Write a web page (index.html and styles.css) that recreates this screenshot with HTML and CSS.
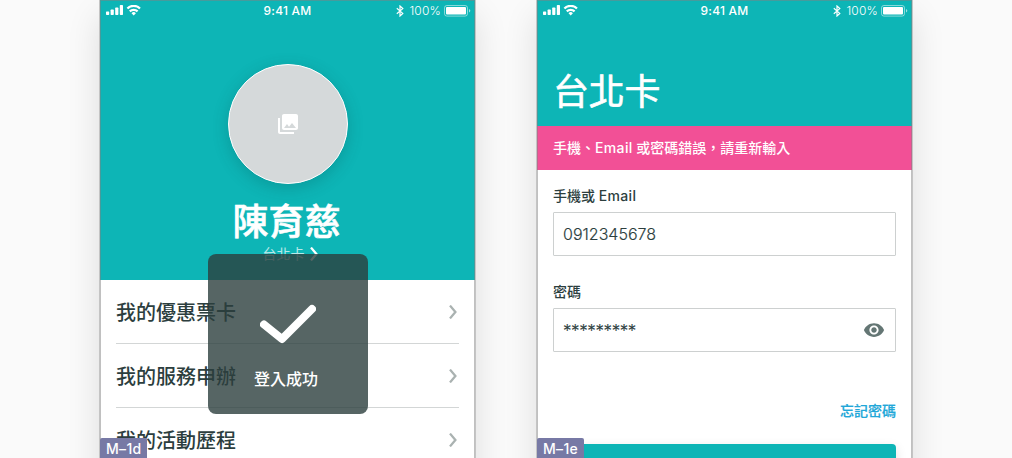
FILE: index.html
```html
<!DOCTYPE html>
<html lang="zh-Hant">
<head>
<meta charset="utf-8">
<title>台北卡</title>
<link rel="stylesheet" href="styles.css">
</head>
<body>
<svg width="0" height="0" class="defs">
  <symbol id="signal" viewBox="0 0 35 11">
    <rect x="0" y="6.4" width="3.2" height="3.6" rx=".7"/><rect x="4.6" y="4.6" width="3.2" height="5.4" rx=".7"/><rect x="9.2" y="2.5" width="3.2" height="7.5" rx=".7"/><rect x="13.8" y="0" width="3.2" height="10" rx=".7"/>
    <g fill="none" stroke="currentColor" stroke-width="2.2"><path d="M21.4 3.5a8.8 8.8 0 0 1 12.6 0"/><path d="M23.8 6.4a5.5 5.5 0 0 1 7.8 0"/></g>
    <path d="M27.7 10.4 25.5 8.2a3 3 0 0 1 4.4 0z"/>
  </symbol>
  <symbol id="bluetooth" viewBox="0 0 8 12"><path d="M.8 3.3 6.8 8.4 4 11V1L6.8 3.6.8 8.7" fill="none" stroke="currentColor" stroke-width="1.2"/></symbol>
  <symbol id="battery" viewBox="0 0 27 12"><rect x=".5" y=".5" width="23" height="10.6" rx="2.4" fill="none" stroke="currentColor" opacity=".5"/><rect x="2" y="2" width="20" height="7.6" rx="1"/><path d="M25 4v3.5q1.3-.6 1.3-1.75T25 4z" opacity=".6"/></symbol>
  <symbol id="chevron" viewBox="0 0 8 14"><path d="M1 .6 6.4 7 1 13.4" fill="none" stroke="currentColor" stroke-width="2.3"/></symbol>
</svg>
<main class="board">
  <section class="phone">
    <header class="hero">
      <div class="status"><svg class="signal"><use href="#signal"/></svg><span class="time">9:41 AM</span><span class="power"><svg class="bluetooth"><use href="#bluetooth"/></svg><span class="percent">100%</span><svg class="battery"><use href="#battery"/></svg></span></div>
      <div class="avatar"><svg width="24" height="24" viewBox="0 0 24 24"><path d="M22 16V4c0-1.100-.9-2-2-2H8c-1.100 0-2 .9-2 2v12c0 1.100.9 2 2 2h12c1.100 0 2-.9 2-2zm-11-4 2.030 2.710L16 11l4 5H8l3-4zM2 6v14c0 1.100.9 2 2 2h14v-2H4V6H2z"/></svg></div>
      <h1 class="name">陳育慈</h1>
      <div class="card-link"><span class="card-label">台北卡</span><svg class="chevron"><use href="#chevron"/></svg></div>
    </header>
    <ul class="menu">
      <li class="menu-item"><span>我的優惠票卡</span><svg class="chevron"><use href="#chevron"/></svg></li>
      <li class="menu-item"><span>我的服務申辦</span><svg class="chevron"><use href="#chevron"/></svg></li>
      <li class="menu-item"><span>我的活動歷程</span><svg class="chevron"><use href="#chevron"/></svg></li>
    </ul>
    <div class="toast">
      <svg width="56" height="40" viewBox="0 0 56 40"><path d="M4 20.5 22 35 52 5" fill="none" stroke="#fff" stroke-width="8" stroke-linecap="round" stroke-linejoin="round"/></svg>
      <span class="toast-text">登入成功</span>
    </div>
    <span class="tag">M–1d</span>
  </section>
  <section class="phone">
    <header class="title-bar">
      <div class="status"><svg class="signal"><use href="#signal"/></svg><span class="time">9:41 AM</span><span class="power"><svg class="bluetooth"><use href="#bluetooth"/></svg><span class="percent">100%</span><svg class="battery"><use href="#battery"/></svg></span></div>
      <h1 class="title">台北卡</h1>
    </header>
    <div class="alert">手機、<span class="latin">Email</span> 或密碼錯誤，請重新輸入</div>
    <form class="form">
      <div class="label">手機或 <span class="latin">Email</span></div>
      <div class="field">0912345678</div>
      <div class="label">密碼</div>
      <div class="field"><span class="mask">*********</span><svg class="eye" viewBox="0 0 24 24"><path d="M12 4.500C7 4.500 2.730 7.610 1 12c1.730 4.390 6 7.500 11 7.500s9.270-3.110 11-7.500c-1.730-4.390-6-7.500-11-7.500zM12 17c-2.760 0-5-2.240-5-5s2.240-5 5-5 5 2.240 5 5-2.240 5-5 5zm0-8c-1.660 0-3 1.340-3 3s1.340 3 3 3 3-1.340 3-3-1.340-3-3-3z"/></svg></div>
      <div class="forgot">忘記密碼</div>
      <div class="submit"></div>
    </form>
    <span class="tag">M–1e</span>
  </section>
</main>
</body>
</html>
```
FILE: styles.css
```css
* { box-sizing: border-box; }
body {
  margin: 0;
  height: 458px;
  overflow: hidden;
  background: #fafafa;
  color: #2c3e3e;
  font-family: Inter, "Noto Sans CJK TC", sans-serif;
}
h1, ul { margin: 0; padding: 0; }
svg { display: block; fill: currentColor; flex: none; }
.defs { position: absolute; }
.board {
  display: grid;
  grid-template-columns: 375px 375px;
  column-gap: 62px;
  padding-left: 100px;
  height: 458px;
  overflow: hidden;
}
.phone {
  position: relative;
  height: 667px;
  background: #fff;
  box-shadow: 0 0 0 1px #c4c4c4, 0 16px 32px rgba(0, 0, 0, .12);
}
.phone::after {
  content: "";
  position: absolute;
  inset: 0;
  border: 1px solid rgba(130, 130, 130, .5);
  border-bottom: 0;
  pointer-events: none;
}
.status {
  display: grid;
  grid-template-columns: 1fr auto 1fr;
  align-items: center;
  width: 100%;
  height: 20px;
  padding: 0 4px 0 6px;
  font-size: 12px;
  line-height: 20px;
}
.signal { width: 35px; height: 11px; }
.time { margin: 1px 2px 0 0; font-weight: 500; letter-spacing: .2px; }
.power { display: flex; align-items: center; justify-content: flex-end; }
.bluetooth { width: 8px; height: 12px; margin-right: 5px; }
.percent { font-weight: 300; letter-spacing: .2px; margin: 1px 3px 0 0; }
.battery { width: 27px; height: 12px; }
.hero {
  display: flex;
  flex-direction: column;
  align-items: center;
  height: 280px;
  background: #0db5b6;
  color: #fff;
}
.avatar {
  display: flex;
  align-items: center;
  justify-content: center;
  width: 120px;
  height: 120px;
  margin-top: 44px;
  border: 1.5px solid #fff;
  border-radius: 50%;
  background: #d5d9da;
  box-shadow: 0 4px 16px rgba(0, 60, 60, .22);
}
.name { margin: 12px 2px 0 0; font-size: 36px; line-height: 52px; font-weight: 500; -webkit-text-stroke: .6px; }
.card-link { display: flex; align-items: center; gap: 5px; height: 20px; margin-top: -4px; padding-left: 5px; }
.card-label { font-size: 14px; line-height: 20px; opacity: .7; }
.chevron { width: 8px; height: 14px; }
.menu { padding: 0 16px; list-style: none; }
.menu-item {
  display: flex;
  align-items: center;
  justify-content: space-between;
  height: 64px;
  border-bottom: 1px solid #d3d6d6;
  font-size: 20px;
  font-weight: 500;
}
.menu-item .chevron { margin-right: 2px; color: #aab2b1; }
.toast {
  position: absolute;
  left: 108px;
  top: 254px;
  display: flex;
  flex-direction: column;
  align-items: center;
  width: 160px;
  height: 160px;
  padding-top: 50px;
  border-radius: 8px;
  background: rgba(44, 62, 61, .8);
  color: #fff;
}
.toast-text { margin-top: 23px; margin-right: 4px; font-size: 16px; line-height: 24px; font-weight: 500; }
.tag {
  position: absolute;
  z-index: 1;
  left: 0;
  top: 438px;
  width: 47px;
  height: 22px;
  padding-left: 6px;
  border-radius: 2px;
  background: #7779a5;
  color: #fff;
  font-size: 14px;
  line-height: 21px;
  font-weight: 500;
  letter-spacing: .3px;
}
.title-bar { height: 126px; background: #0db5b6; color: #fff; }
.title { padding: 45px 0 0 16px; font-size: 36px; line-height: 54px; font-weight: 400; letter-spacing: -.2px; -webkit-text-stroke: .6px; }
.alert { height: 44px; padding-left: 16px; background: #f25096; color: #fff; font-size: 14px; line-height: 44px; font-weight: 500; }
.latin { letter-spacing: .35px; }
.form { padding: 16px 16px 0; }
.label { height: 26px; font-size: 14px; line-height: 20px; font-weight: 500; }
.field {
  display: flex;
  align-items: center;
  justify-content: space-between;
  height: 44px;
  margin-bottom: 26px;
  padding: 0 10px 0 9px;
  border: 1px solid #cdd0d0;
  border-radius: 1px;
  font-size: 16px;
  font-weight: 300;
  -webkit-text-stroke: .15px;
}
.mask { padding-top: 1px; font-size: 17px; letter-spacing: -.4px; }
.eye { width: 22px; height: 22px; color: #647674; }
.forgot { margin-top: 49px; color: #22a7d8; font-size: 14px; line-height: 20px; font-weight: 500; text-align: right; -webkit-text-stroke: .2px; }
.submit { height: 48px; margin-top: 23px; border-radius: 4px; background: #0db5b6; box-shadow: 0 4px 12px rgba(0, 0, 0, .12); }
```
